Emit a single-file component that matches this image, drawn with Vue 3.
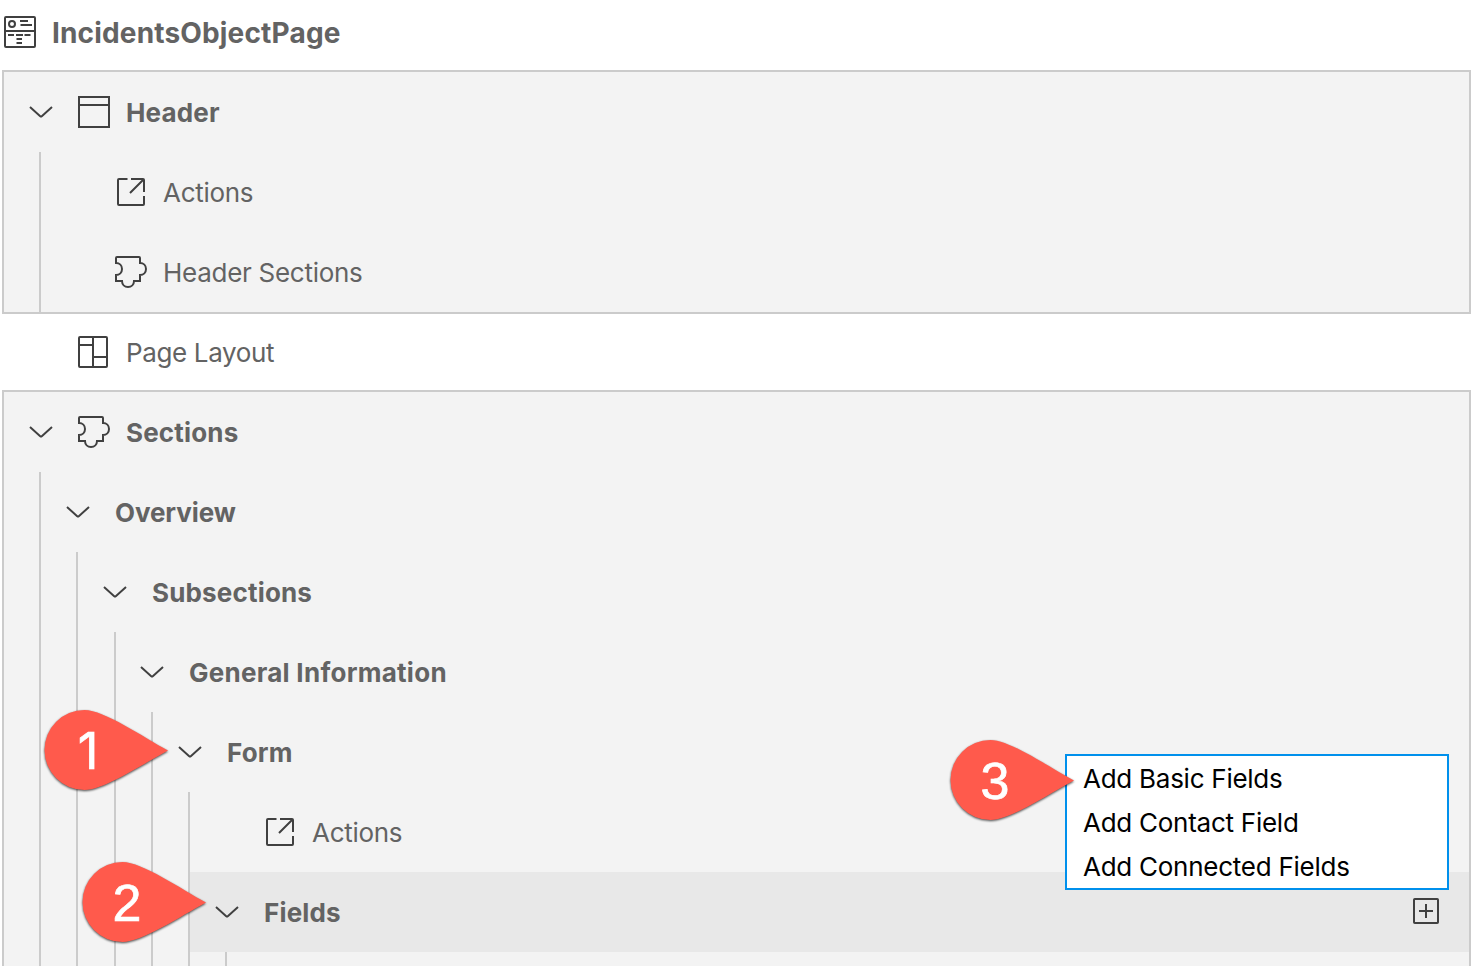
<script setup>
import { h } from 'vue'

const icons = {
  page: [
    'M2 1h28a1 1 0 0 1 1 1v28a1 1 0 0 1-1 1H2a1 1 0 0 1-1-1V2a1 1 0 0 1 1-1z',
    'M1 15h30M16 5h8M16.5 9h11.5M4 19h6M12 19h7M20.5 19h6M12.5 23h5.5M12.5 27h5.5',
    'M8 5a3 3 0 1 1 0 6a3 3 0 1 1 0-6z'
  ],
  header: ['M1 1h30v30H1zM1 9h30'],
  action: [
    'M12.5 3H4a1 1 0 0 0-1 1v24a1 1 0 0 0 1 1h24a1 1 0 0 0 1-1v-8',
    'M16 3h12a1 1 0 0 1 1 1v12M15 17L28.5 3.5'
  ],
  puzzle: [
    'M25 7c3.5 0 6 2.6 6 6s-2.5 6-6 6v6h-6c0 3.5-2.6 6-6 6s-6-2.5-6-6H1v-6c3.5 0 6-2.6 6-6s-2.5-6-6-6V2a1 1 0 0 1 1-1h22a1 1 0 0 1 1 1z'
  ],
  layout: [
    'M2 1h26a1 1 0 0 1 1 1v28a1 1 0 0 1-1 1H2a1 1 0 0 1-1-1V2a1 1 0 0 1 1-1z',
    'M15 1v30M1 9h14M15 21h14'
  ]
}

const stroke = { fill: 'none', stroke: '#404040', 'stroke-width': 2 }

const Icon = (props) =>
  h('svg', { width: 32, height: 32, viewBox: '0 0 32 32', ...stroke },
    icons[props.name].map((d) => h('path', { d })))
Icon.props = ['name']

const Chevron = () =>
  h('svg', { width: 24, height: 12, viewBox: '0 0 24 12', ...stroke },
    [h('path', { d: 'M1 1L11.2 10.2Q12 10.8 12.8 10.2L23 1' })])

const menu = ['Add Basic Fields', 'Add Contact Field', 'Add Connected Fields']
const pins = [1, 2, 3]
</script>

<template>
  <main class="page">
    <header class="title">
      <Icon name="page" />
      <h1>IncidentsObjectPage</h1>
    </header>

    <section class="panel">
      <div class="row bold"><Chevron class="chev" /><Icon name="header" /><span class="label">Header</span></div>
      <div class="children">
        <div class="row leaf"><Icon name="action" /><span class="label">Actions</span></div>
        <div class="row leaf"><Icon name="puzzle" /><span class="label">Header Sections</span></div>
      </div>
    </section>

    <div class="row between"><Icon name="layout" /><span class="label">Page Layout</span></div>

    <section class="panel">
      <div class="row bold"><Chevron class="chev" /><Icon name="puzzle" /><span class="label">Sections</span></div>
      <div class="children">
        <div class="row bold narrow"><Chevron class="chev" /><span>Overview</span></div>
        <div class="children">
          <div class="row bold"><Chevron class="chev" /><span>Subsections</span></div>
          <div class="children wide">
            <div class="row bold tight"><Chevron class="chev" /><span>General Information</span></div>
            <div class="children">
              <div class="row bold"><Chevron class="chev" /><span>Form</span></div>
              <div class="children">
                <div class="row leaf"><Icon name="action" /><span class="label">Actions</span></div>
                <div class="row bold selected">
                  <Chevron class="chev" /><span>Fields</span>
                  <svg class="add" width="26" height="26" viewBox="0 0 26 26" fill="none" stroke="#404040" stroke-width="2">
                    <rect x="1" y="1" width="24" height="24" rx="0.8" />
                    <path d="M13 6v14M6 13h14" />
                  </svg>
                </div>
                <div class="children"><div class="row"></div></div>
              </div>
            </div>
          </div>
        </div>
      </div>
    </section>

    <ul class="menu">
      <li v-for="item in menu" :key="item">{{ item }}</li>
    </ul>

    <div v-for="n in pins" :key="n" class="pin" :class="'pin-' + n">
      <svg width="124" height="80" viewBox="0 0 124 80">
        <path d="M124 40.5C99 27 60 0 40.5 0A40 40 0 0 0 40.5 80C60 80 99 54 124 40.5z" fill="#ff5a4c" />
      </svg>
      <span>{{ n }}</span>
    </div>
  </main>
</template>

<style>
body { margin: 0; background: #fff; }
</style>

<style scoped>
.page {
  position: relative;
  width: 1476px;
  height: 966px;
  overflow: hidden;
  font-family: Inter, "Liberation Sans", sans-serif;
  font-size: 26px;
  color: #636363;
}
.page svg { flex: none; display: block; }
.title {
  display: flex;
  align-items: center;
  gap: 16px;
  height: 64px;
  padding: 0 0 6px 4px;
}
h1 { margin: 1px 0 0; font-size: 28px; font-weight: 700; line-height: 34px; letter-spacing: 0.16px; }
.panel {
  margin-left: 2px;
  width: 1465px;
  border: 2px solid #cbcbcb;
  background: #f3f3f3;
}
.row {
  display: flex;
  align-items: center;
  height: 80px;
  padding-left: 25px;
  white-space: nowrap;
  letter-spacing: -0.28px;
}
.row > span { margin-left: 25px; padding-top: 2px; line-height: 32px; }
.row > .label { margin-left: 16px; }
.chev + svg { margin-left: 25px; }
.bold { font-weight: 700; letter-spacing: 0.17px; }
.narrow { letter-spacing: -0.1px; }
.leaf { padding-left: 74px; }
.tight { padding-left: 24px; letter-spacing: 0.27px; }
.between { height: 76px; padding-left: 78px; letter-spacing: -0.36px; }
.children { margin-left: 35px; border-left: 2px solid #cbcbcb; }
.children.wide { margin-left: 36px; }
.selected { background: #e8e8e8; }
.add { margin: 0 30px 2px auto; }
.menu {
  position: absolute;
  left: 1065px;
  top: 754px;
  width: 380px;
  margin: 0;
  padding: 0;
  border: 2px solid #0090ec;
  background: #fff;
  color: #000;
  list-style: none;
  letter-spacing: -0.26px;
}
.menu li { height: 44px; padding-left: 16px; line-height: 46px; }
.pin { position: absolute; width: 124px; height: 80px; }
.pin svg { filter: drop-shadow(0.5px 1.5px 1px rgba(0, 0, 0, 0.7)); }
.pin span {
  position: absolute;
  left: 15px;
  top: 0;
  width: 60px;
  text-align: center;
  font: 52px/82px "Liberation Sans", Arial, sans-serif;
  -webkit-text-stroke: 0.7px #fff;
  color: #fff;
}
.pin-1 { left: 44px; top: 710px; }
.pin-1 span { left: 14px; font: 51px/82px Inter, sans-serif; }
.pin-2 { left: 82px; top: 862px; }
.pin-3 { left: 950px; top: 740px; }
</style>
